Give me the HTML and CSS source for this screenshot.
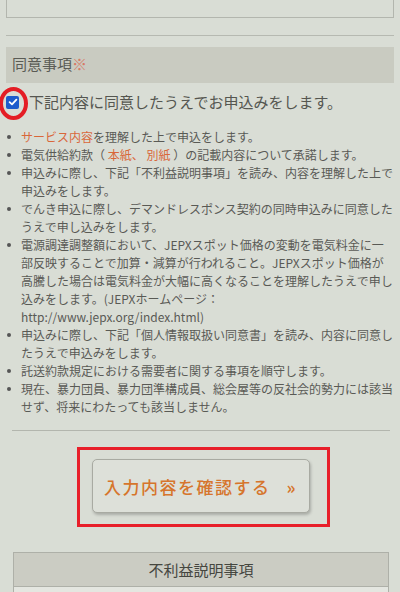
FILE: index.html
```html
<!DOCTYPE html>
<html lang="ja">
<head>
<meta charset="utf-8">
<link rel="stylesheet" href="styles.css">
</head>
<body>
<div class="page">
  <div class="top-box"></div>
  <div class="rule"></div>
  <div class="section-head">同意事項<span class="req">※</span></div>
  <label class="agree">
    <span class="check-wrap">
      <span class="checkbox">
        <svg viewBox="0 0 12 12" width="12" height="12"><path d="M2.6 6.2 L5 8.4 L9.4 3.6" fill="none" stroke="#fff" stroke-width="1.8" stroke-linecap="round" stroke-linejoin="round"/></svg>
      </span>
      <span class="circle"></span>
    </span>
    <span class="agree-text">下記内容に同意したうえでお申込みをします。</span>
  </label>
  <ul class="terms">
    <li><span class="link">サービス内容</span>を理解した上で申込をします。</li>
    <li>電気供給約款（ <span class="link">本紙、</span> <span class="link">別紙</span> ）の記載内容について承諾します。</li>
    <li>申込みに際し、下記「不利益説明事項」を読み、内容を理解した上で<br>申込みをします。</li>
    <li>でんき申込に際し、デマンドレスポンス契約の同時申込みに同意した<br>うえで申し込みをします。</li>
    <li>電源調達調整額において、JEPXスポット価格の変動を電気料金に一<br>部反映することで加算・減算が行われること。JEPXスポット価格が<br>高騰した場合は電気料金が大幅に高くなることを理解したうえで申し<br>込みをします。(JEPXホームページ：<br>http://www.jepx.org/index.html)</li>
    <li>申込みに際し、下記「個人情報取扱い同意書」を読み、内容に同意し<br>たうえで申込みをします。</li>
    <li>託送約款規定における需要者に関する事項を順守します。</li>
    <li>現在、暴力団員、暴力団準構成員、総会屋等の反社会的勢力には該当<br>せず、将来にわたっても該当しません。</li>
  </ul>
  <div class="rule2"></div>
  <div class="highlight">
    <button class="confirm">入力内容を確認する<span class="arrow">»</span></button>
  </div>
  <div class="table">
    <div class="table-head">不利益説明事項</div>
    <div class="table-body"></div>
  </div>
</div>
</body>
</html>
```
FILE: styles.css
```css
html, body {
  margin: 0;
  padding: 0;
}
body {
  background: #d9ddd5;
  font-family: "Noto Sans CJK JP", "Noto Sans", sans-serif;
  color: #545550;
  width: 400px;
  height: 592px;
  overflow: hidden;
}
.page {
  display: flex;
  flex-direction: column;
}
.top-box {
  height: 17px;
  margin: 0 6px;
  border: 1px solid #b3b6ae;
  border-top: none;
}
.rule {
  margin: 17px 6px 0;
  border-top: 1px solid #b6b9b1;
}
.section-head {
  margin: 11px 6px 0;
  height: 36px;
  background: #c9cbc1;
  font-size: 15px;
  line-height: 34px;
  padding-left: 6px;
  color: #5a5b55;
}
.req {
  color: #d77a66;
}
.agree {
  display: flex;
  align-items: center;
  padding: 9px 0 10px 6px;
  line-height: 20px;
}
.check-wrap {
  position: relative;
  width: 13px;
  height: 13px;
  display: block;
}
.checkbox {
  display: flex;
  width: 13px;
  height: 13px;
  border-radius: 2px;
  background: #1d5ccc;
  align-items: center;
  justify-content: center;
}
.circle {
  position: absolute;
  left: -7px;
  top: -9px;
  width: 21px;
  height: 25px;
  border: 4px solid #e41d25;
  border-radius: 50%;
}
.agree-text {
  margin-left: 10px;
  font-size: 15px;
  color: #555650;
}
.terms {
  list-style: none;
  margin: 6px 0 0;
  padding: 0 0 0 21px;
  font-size: 12px;
  line-height: 18px;
  color: #595a55;
}
.terms li {
  position: relative;
}
.terms li::before {
  content: "";
  position: absolute;
  left: -14px;
  top: 7px;
  width: 4px;
  height: 4px;
  border-radius: 50%;
  background: #555;
}
.link {
  color: #d9673a;
}
.rule2 {
  margin: 14px 10px 0 12px;
  border-top: 1px solid #b3b6ae;
}
.highlight {
  margin: 16px 0 0 77px;
  width: 247px;
  border: 3px solid #e81f2a;
  display: flex;
  align-items: flex-start;
  justify-content: center;
  padding-top: 9px;
  box-sizing: content-box;
  height: 65px;
}
.confirm {
  width: 218px;
  height: 54px;
  border: 1px solid #a8aaa2;
  border-radius: 5px;
  background: #dde0d9;
  box-shadow: 1px 2px 3px rgba(0, 0, 0, 0.22);
  font-family: "Noto Sans CJK JP", sans-serif;
  font-size: 17px;
  font-weight: 500;
  letter-spacing: 1.5px;
  color: #d6752c;
  padding: 0;
  margin-left: -6px;
}
.arrow {
  margin-left: 16px;
  font-weight: 700;
}
.table {
  margin: 25px 11px 0 13px;
  border: 1px solid #aeb0a8;
}
.table-head {
  height: 33px;
  line-height: 33px;
  background: #cbccc3;
  text-align: center;
  font-size: 15px;
  color: #45463f;
  border-bottom: 1px solid #aeb0a8;
}
.table-body {
  height: 5px;
  background: #e4e6e0;
}
```
